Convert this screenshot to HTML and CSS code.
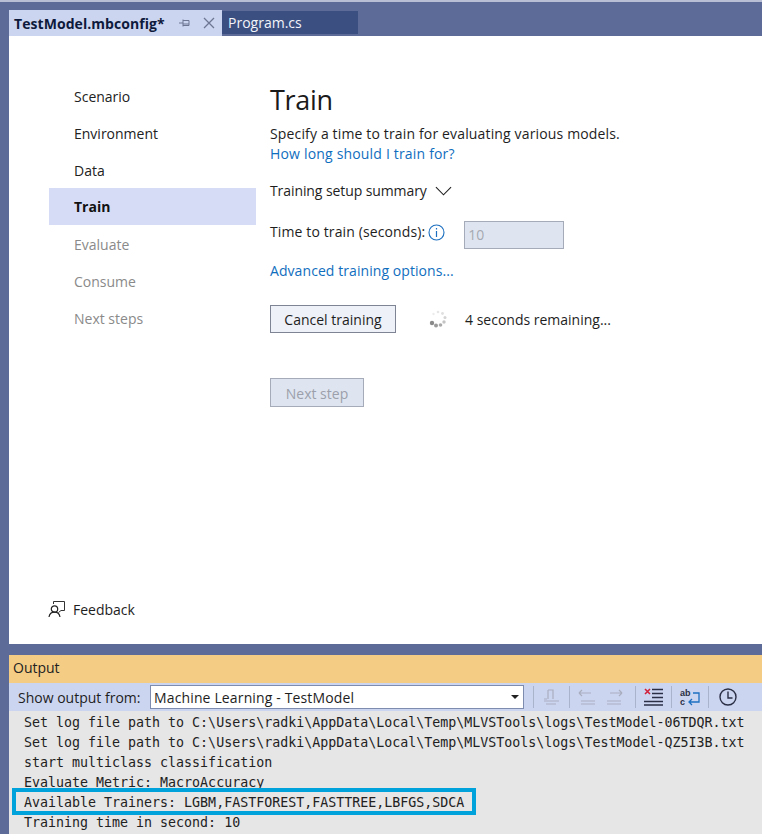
FILE: index.html
```html
<!DOCTYPE html>
<html lang="en">
<head>
<meta charset="utf-8">
<title>TestModel.mbconfig</title>
<link rel="stylesheet" href="styles.css">
</head>
<body>
<div class="top-edge"></div>
<div class="tabs">
  <div class="tab-active">
    <span class="tab-title">TestModel.mbconfig*</span>
    <svg class="pin" width="12" height="12" viewBox="0 0 12 12"><path d="M0 6h4M4 2.500v7M4 3.500h6v5H4M4 7h6" fill="none" stroke="#6d7693" stroke-width="1"/></svg>
    <svg class="close" width="12" height="12" viewBox="0 0 12 12"><path d="M1 1l10 10M11 1L1 11" fill="none" stroke="#6d7693" stroke-width="1.300"/></svg>
  </div>
  <div class="tab-other">Program.cs</div>
</div>
<main class="panel">
  <nav class="steps">
    <div class="step">Scenario</div>
    <div class="step">Environment</div>
    <div class="step">Data</div>
    <div class="step current">Train</div>
    <div class="step off">Evaluate</div>
    <div class="step off">Consume</div>
    <div class="step off">Next steps</div>
    <div class="feedback">
      <svg width="18" height="18" viewBox="0 0 18 18"><path d="M5.500 4V1.500h11v9H13l-2.500 2" fill="none" stroke="#333" stroke-width="1"/><circle cx="6.500" cy="9" r="3.200" fill="none" stroke="#222" stroke-width="1.200"/><path d="M1 17c.5-3 2.500-4.800 5.500-4.800s5 1.800 5.500 4.800" fill="none" stroke="#222" stroke-width="1.200"/></svg>
      <span>Feedback</span>
    </div>
  </nav>
  <section class="content">
    <h1>Train</h1>
    <p class="desc">Specify a time to train for evaluating various models.</p>
    <a class="link how">How long should I train for?</a>
    <div class="summary">
      <span>Training setup summary</span>
      <svg width="18" height="10" viewBox="0 0 18 10"><path d="M1 1l8 8 8-8" fill="none" stroke="#222" stroke-width="1.200"/></svg>
    </div>
    <div class="time-row">
      <span class="time-label">Time to train (seconds):</span>
      <svg class="info" width="17" height="17" viewBox="0 0 17 17"><circle cx="8.500" cy="8.500" r="7.500" fill="none" stroke="#1c6fc0" stroke-width="1.100"/><path d="M8.500 7v6M8.500 4v1.600" fill="none" stroke="#1c6fc0" stroke-width="1.200"/></svg>
      <div class="time-input">10</div>
    </div>
    <a class="link advanced">Advanced training options...</a>
    <div class="cancel-row">
      <div class="btn">Cancel training</div>
      <svg class="spinner" width="20" height="20" viewBox="0 0 20 20">
        <circle cx="4" cy="14" r="2.200" fill="#8a8a8a"/><circle cx="8" cy="16.500" r="2" fill="#9a9a9a"/><circle cx="12.500" cy="16" r="1.800" fill="#aaa"/><circle cx="16" cy="13" r="1.700" fill="#c4c4c4"/><circle cx="17" cy="8.500" r="1.500" fill="#d4d4d4"/><circle cx="14.500" cy="4.500" r="1.400" fill="#e0e0e0"/><circle cx="10" cy="3" r="1.300" fill="#e6e6e6"/><circle cx="5.500" cy="5" r="1.200" fill="#ececec"/>
      </svg>
      <span class="remaining">4 seconds remaining...</span>
    </div>
    <div class="btn next">Next step</div>
  </section>
</main>
<section class="output">
  <div class="output-title">Output</div>
  <div class="toolbar">
    <span class="show-label">Show output from:</span>
    <div class="select"><span>Machine Learning - TestModel</span><i class="caret"></i></div>
    <i class="sep"></i>
    <svg class="tool" width="20" height="20" viewBox="0 0 20 20"><path d="M7 3h5v9M7 3v9M3 14h15M5 17h10M3 12h3" fill="none" stroke="#a9aebf" stroke-width="1.200"/></svg>
    <i class="sep s2"></i>
    <svg class="tool" width="20" height="20" viewBox="0 0 20 20"><path d="M2 6h12M2 6l3-3M2 6l3 3M4 14h14M4 17h14" fill="none" stroke="#a9aebf" stroke-width="1.200"/></svg>
    <svg class="tool t2" width="20" height="20" viewBox="0 0 20 20"><path d="M5 6h12M17 6l-3-3M17 6l-3 3M2 14h14M2 17h14" fill="none" stroke="#a9aebf" stroke-width="1.200"/></svg>
    <i class="sep s3"></i>
    <svg class="tool" width="22" height="20" viewBox="0 0 22 20"><path d="M2 2l5 5M7 2L2 7" stroke="#d0203a" stroke-width="1.600" fill="none"/><path d="M9 2.500h11M9 6.500h11M9 10.500h11M1 14.500h19M1 18h19" stroke="#2a2f45" stroke-width="1.300" fill="none"/></svg>
    <i class="sep s4"></i>
    <svg class="tool" width="22" height="20" viewBox="0 0 22 20"><text class="ab" x="1" y="9">ab</text><text class="ab" x="1" y="18">c</text><path d="M14 6h6v9h-9M13 12l-3 3 3 3" fill="none" stroke="#1c6fc0" stroke-width="1.300"/></svg>
    <i class="sep s5"></i>
    <svg class="tool t3" width="20" height="20" viewBox="0 0 20 20"><circle cx="10" cy="10" r="8" fill="none" stroke="#2a2f45" stroke-width="1.400"/><path d="M10 4.500V11h4.500" fill="none" stroke="#2a2f45" stroke-width="1.400"/></svg>
  </div>
  <div class="log">
    <div class="line">Set log file path to C:\Users\radki\AppData\Local\Temp\MLVSTools\logs\TestModel-06TDQR.txt</div>
    <div class="line">Set log file path to C:\Users\radki\AppData\Local\Temp\MLVSTools\logs\TestModel-QZ5I3B.txt</div>
    <div class="line">start multiclass classification</div>
    <div class="line">Evaluate Metric: MacroAccuracy</div>
    <div class="line">Available Trainers: LGBM,FASTFOREST,FASTTREE,LBFGS,SDCA</div>
    <div class="line">Training time in second: 10</div>
    <div class="highlight"></div>
  </div>
</section>
</body>
</html>
```
FILE: styles.css
```css
* { box-sizing: border-box; }
html, body { height: 100%; }
body {
  margin: 0;
  height: 834px;
  overflow: hidden;
  background: #5d6b99;
  padding-left: 9px;
  display: flex;
  flex-direction: column;
  font-family: "Open Sans", "Noto Sans", sans-serif;
  font-size: 14px;
  color: #1e1e1e;
  position: relative;
}
.top-edge { height: 2px; margin-left: -9px; background: #b9bfd4; flex: none; }
.tabs { height: 34px; padding-top: 8px; display: flex; align-items: flex-start; flex: none; }
.tab-active {
  width: 213px; height: 26px; background: #ccd5f0;
  display: flex; align-items: center; padding-left: 5px;
}
.tab-title { font-weight: 700; font-size: 14px; color: #0e1a3c; letter-spacing: .06px; width: 165px; white-space: nowrap; }
.close { margin-left: 12px; }
.tab-other {
  width: 136px; height: 23px; margin-top: 1px; background: #3b4f81; color: #f2f4fa;
  font-size: 14px; line-height: 23px; padding-left: 6px;
}
.panel { height: 608px; background: #fff; display: flex; flex: none; }
.steps { width: 247px; padding: 42px 0 0 40px; flex: none; display: flex; flex-direction: column; }
.step { height: 37px; line-height: 37px; padding-left: 25px; font-size: 14px; color: #222; }
.step.current { background: #d6dcf5; font-weight: 700; color: #111; margin: -1px 0 1px; line-height: 38px; }
.step.off { color: #8a8a8a; }
.feedback { margin: auto 0 25px -1px; display: flex; align-items: center; gap: 7px; font-size: 14px; height: 20px; }
.content { padding: 43px 0 0 14px; flex: 1; }
h1 { margin: 0; font-weight: 400; font-size: 27px; line-height: 42px; color: #1a1a1a; letter-spacing: -.3px; }
.desc { margin: 3px 0 0; line-height: 20px; letter-spacing: .15px; }
.link { display: block; color: #106ebe; line-height: 20px; }
.how { letter-spacing: .18px; }
.summary { display: flex; align-items: center; gap: 8px; margin-top: 17px; line-height: 20px; letter-spacing: -.09px; }
.summary svg { width: 17px; }
.time-row { display: flex; align-items: flex-start; margin-top: 20px; height: 28px; }
.time-label { line-height: 22px; letter-spacing: .12px; }
.info { margin: 3px 0 0 3px; }
.time-input {
  margin-left: 19px; width: 100px; height: 28px; background: #dfe5f0; border: 1px solid #a5abb8;
  color: #a5a9b2; line-height: 26px; padding-left: 3px;
}
.advanced { margin-top: 12px; letter-spacing: .07px; }
.cancel-row { display: flex; align-items: center; margin-top: 24px; }
.btn {
  height: 28px; border: 1px solid #7e8494; background: #eef1f8; line-height: 28px; padding: 0 13px;
  width: 126px; white-space: nowrap; text-align: center;
}
.spinner { margin-left: 32px; }
.remaining { margin-left: 17px; }
.next { width: 94px; height: 29px; margin-top: 45px; background: #dfe5f0; border-color: #a5abb8; color: #9ba0ab; padding: 0; line-height: 30px; }
.output { flex: 1; margin-top: 11px; display: flex; flex-direction: column; min-height: 0; }
.output-title { height: 28px; background: #f5cc84; line-height: 26px; padding-left: 4px; color: #222; flex: none; }
.toolbar { height: 28px; background: #ccd5f0; display: flex; align-items: center; padding-left: 9px; flex: none; }
.show-label { width: 132px; white-space: nowrap; }
.select {
  width: 374px; height: 24px; background: #fff; border: 1px solid #7e8cb0;
  display: flex; align-items: center; justify-content: space-between; padding: 0 4px 0 3px; font-size: 14px; letter-spacing: .14px;
}
.caret { width: 0; height: 0; border: 4px solid transparent; border-top-color: #222; border-bottom: 0; }
.sep { width: 1px; height: 22px; background: #aab3cc; margin-left: 9px; flex: none; }
.sep.s2 { margin-left: 8px; }
.sep.s3 { margin-left: 10px; }
.sep.s4 { margin-left: 6px; }
.sep.s5 { margin-left: 7px; }
.tool { margin-left: 7px; flex: none; }
.tool.t2 { margin-left: 8px; }
.tool.t3 { margin-left: 9px; }
.ab { font: 700 9px "Liberation Sans", sans-serif; fill: #2a2f45; }
.log {
  flex: 1; background: #e6e6e6; position: relative; padding: 2px 0 0 15px; overflow: hidden;
  font-family: "DejaVu Sans Mono", monospace; font-size: 13.300px; color: #222;
}
.line { height: 20px; line-height: 20px; white-space: nowrap; }
.highlight { position: absolute; left: 3px; top: 77px; width: 464px; height: 27px; border: 4px solid #00a2dc; }
```
